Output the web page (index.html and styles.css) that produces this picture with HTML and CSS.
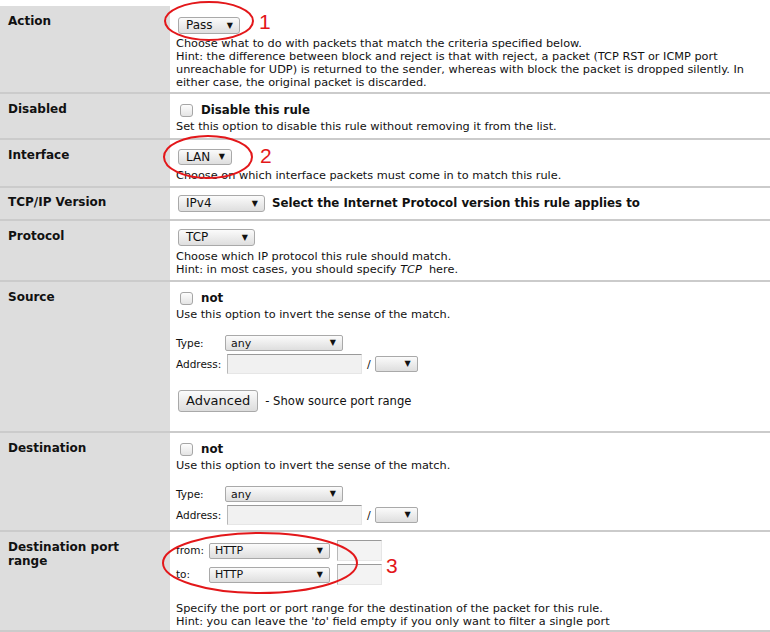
FILE: index.html
```html
<!DOCTYPE html>
<html>
<head>
<meta charset="utf-8">
<link rel="stylesheet" href="styles.css">
</head>
<body>
<div class="form">
  <div class="row r1">
    <div class="label">Action</div>
    <div class="content">
      <div class="select w-pass"><span>Pass</span><i>&#9660;</i></div>
      <p class="desc">Choose what to do with packets that match the criteria specified below.<br>Hint: the difference between block and reject is that with reject, a packet (TCP RST or ICMP port unreachable for UDP) is returned to the sender, whereas with block the packet is dropped silently. In either case, the original packet is discarded.</p>
    </div>
  </div>
  <div class="row r2">
    <div class="label">Disabled</div>
    <div class="content">
      <div class="check-line"><span class="checkbox"></span><b class="big">Disable this rule</b></div>
      <p class="desc">Set this option to disable this rule without removing it from the list.</p>
    </div>
  </div>
  <div class="row r3">
    <div class="label">Interface</div>
    <div class="content">
      <div class="select w-lan"><span>LAN</span><i>&#9660;</i></div>
      <p class="desc">Choose on which interface packets must come in to match this rule.</p>
    </div>
  </div>
  <div class="row r4">
    <div class="label">TCP/IP Version</div>
    <div class="content inline">
      <div class="select w-ip"><span>IPv4</span><i>&#9660;</i></div>
      <b class="big">Select the Internet Protocol version this rule applies to</b>
    </div>
  </div>
  <div class="row r5">
    <div class="label">Protocol</div>
    <div class="content">
      <div class="select w-tcp"><span>TCP</span><i>&#9660;</i></div>
      <p class="desc">Choose which IP protocol this rule should match.<br>Hint: in most cases, you should specify <em>TCP</em> &nbsp;here.</p>
    </div>
  </div>
  <div class="row r6">
    <div class="label">Source</div>
    <div class="content">
      <div class="check-line"><span class="checkbox"></span><b class="big">not</b></div>
      <p class="desc">Use this option to invert the sense of the match.</p>
      <div class="addr">
        <div class="addr-row"><span class="small-label">Type:</span><div class="select small w-any"><span>any</span><i>&#9660;</i></div></div>
        <div class="addr-row"><span class="small-label">Address:</span><span class="textbox w-addr"></span><span class="slash">/</span><div class="select small w-mask"><span></span><i>&#9660;</i></div></div>
      </div>
      <div class="adv-line"><span class="button">Advanced</span><span class="adv-text">- Show source port range</span></div>
    </div>
  </div>
  <div class="row r7">
    <div class="label">Destination</div>
    <div class="content">
      <div class="check-line"><span class="checkbox"></span><b class="big">not</b></div>
      <p class="desc">Use this option to invert the sense of the match.</p>
      <div class="addr">
        <div class="addr-row"><span class="small-label">Type:</span><div class="select small w-any"><span>any</span><i>&#9660;</i></div></div>
        <div class="addr-row"><span class="small-label">Address:</span><span class="textbox w-addr"></span><span class="slash">/</span><div class="select small w-mask"><span></span><i>&#9660;</i></div></div>
      </div>
    </div>
  </div>
  <div class="row r8">
    <div class="label">Destination port range</div>
    <div class="content">
      <div class="ports">
        <span class="small-label pl">from:</span><div class="select small w-http"><span>HTTP</span><i>&#9660;</i></div><span class="textbox port"></span>
        <span class="small-label pl">to:</span><div class="select small w-http"><span>HTTP</span><i>&#9660;</i></div><span class="textbox port"></span>
      </div>
      <p class="desc">Specify the port or port range for the destination of the packet for this rule.<br>Hint: you can leave the <em>'to'</em> field empty if you only want to filter a single port</p>
    </div>
  </div>
</div>
<svg class="marks" width="770" height="632" viewBox="0 0 770 632">
  <ellipse cx="209" cy="21" rx="44" ry="19" fill="none" stroke="#e3171a" stroke-width="2"/>
  <ellipse cx="208" cy="157" rx="44" ry="21" fill="none" stroke="#e3171a" stroke-width="2"/>
  <ellipse cx="260" cy="563" rx="97" ry="30" fill="none" stroke="#e3171a" stroke-width="2"/>
</svg>
<span class="num n1">1</span>
<span class="num n2">2</span>
<span class="num n3">3</span>
</body>
</html>
```
FILE: styles.css
```css
html, body {
  margin: 0;
  padding: 0;
  background: #fff;
}
body {
  padding-top: 6px;
  font-family: "DejaVu Sans", Verdana, sans-serif;
  color: #111;
  position: relative;
  width: 770px;
  height: 632px;
  overflow: hidden;
}
.form {
  width: 770px;
}
.row {
  display: grid;
  grid-template-columns: 170px 1fr;
  border-bottom: 2px solid #cbcbcb;
}
.label {
  background: #dddddd;
  font-weight: bold;
  font-size: 12px;
  line-height: 14px;
  padding: 7px 8px 0 8px;
  color: #111;
}
.content {
  padding: 8px 6px 3px 6px;
  font-size: 11.3px;
  line-height: 13px;
}
.desc {
  margin: 0;
  font-size: 11.3px;
  line-height: 13px;
}
.desc em {
  font-style: italic;
}
.big {
  font-size: 11.8px;
  font-weight: bold;
}
.select {
  display: flex;
  align-items: center;
  justify-content: space-between;
  box-sizing: border-box;
  height: 17px;
  margin-left: 2px;
  padding: 0 6px 0 7px;
  border: 1px solid #a9a9a9;
  border-radius: 3px;
  background: linear-gradient(#fbfbfb, #dedede);
  font-size: 12px;
  color: #111;
}
.select i {
  font-style: normal;
  font-size: 8px;
  line-height: 8px;
}
.select.small {
  height: 16px;
  font-size: 11px;
  border-radius: 2px;
  padding: 0 6px 0 5px;
}
.w-pass { width: 62px; }
.w-lan { width: 54px; }
.w-ip { width: 87px; }
.w-tcp { width: 77px; }
.w-any { width: 118px; }
.w-mask { width: 43px; }
.w-http { width: 121px; }
.r1 .content { padding-top: 11px; }
.r1 .select { margin-bottom: 3px; }
.r1 .label { padding-top: 8px; }
.r2 .content { padding-top: 7px; padding-bottom: 5px; }
.r2 .label { padding-top: 8px; }
.check-line {
  display: flex;
  align-items: center;
  height: 19px;
}
.checkbox {
  display: inline-block;
  box-sizing: border-box;
  width: 13px;
  height: 13px;
  margin: 0 8px 0 4px;
  border: 1px solid #a6a6a6;
  border-radius: 3px;
  background: linear-gradient(#fdfdfd, #e4e4e4);
}
.r3 .content { padding-top: 9px; padding-bottom: 4px; }
.r3 .select { height: 16px; margin-bottom: 4px; }
.r3 .label { padding-top: 8px; }
.inline {
  display: flex;
  align-items: center;
  padding-top: 7px;
  padding-bottom: 7px;
}
.inline .big { margin-left: 7px; }
.r4 .label { padding-top: 7px; }
.r5 .content { padding-top: 8px; padding-bottom: 4px; }
.r5 .select { margin-bottom: 4px; }
.r5 .label { padding-top: 8px; }
.r6 .content, .r7 .content { padding-top: 7px; padding-bottom: 19px; }
.r6 .label, .r7 .label { padding-top: 8px; }
.r7 .content { padding-bottom: 5px; }
.addr {
  margin-top: 13px;
  display: flex;
  flex-direction: column;
  gap: 2px;
}
.addr-row {
  display: flex;
  align-items: center;
  height: 20px;
}
.addr-row:first-child { height: 18px; }
.small-label {
  display: inline-block;
  width: 47px;
  font-size: 10.5px;
}
.addr-row:nth-child(2) .small-label { width: 49px; }
.textbox {
  display: inline-block;
  box-sizing: border-box;
  background: #f1f1f1;
  border-top: 1px solid #9a9a9a;
  border-left: 1px solid #b8b8b8;
  border-right: 1px solid #e6e6e6;
  border-bottom: 1px solid #e6e6e6;
}
.w-addr {
  width: 135px;
  height: 20px;
  margin-left: 2px;
}
.slash {
  margin: 0 2px 0 5px;
  font-size: 11px;
}
.adv-line {
  display: flex;
  align-items: center;
  margin-top: 16px;
}
.button {
  display: inline-block;
  box-sizing: border-box;
  height: 22px;
  line-height: 20px;
  padding: 0 7px;
  margin-left: 2px;
  border: 1px solid #a9a9a9;
  border-radius: 3px;
  background: linear-gradient(#fbfbfb, #dcdcdc);
  font-size: 13px;
}
.adv-text {
  margin-left: 7px;
  font-size: 11.6px;
}
.r8 .content { padding-top: 8px; padding-bottom: 2px; }
.r8 .label { padding-top: 8px; }
.ports {
  display: grid;
  grid-template-columns: 27px 121px 45px;
  column-gap: 6px;
  row-gap: 3px;
  align-items: center;
  margin-bottom: 17px;
  width: 220px;
}
.pl { width: auto; }
.ports .select { margin-left: 0; }
.ports .textbox.port { margin-left: 1px; }
.textbox.port {
  width: 45px;
  height: 21px;
  background: #f3f3f3;
}
.marks {
  position: absolute;
  left: 0;
  top: 0;
  pointer-events: none;
}
.num {
  position: absolute;
  font-family: "Liberation Sans", Arial, sans-serif;
  font-size: 21px;
  line-height: 21px;
  color: #e3171a;
}
.n1 { left: 259px; top: 11px; }
.n2 { left: 260px; top: 145px; }
.n3 { left: 386px; top: 555px; }
```
